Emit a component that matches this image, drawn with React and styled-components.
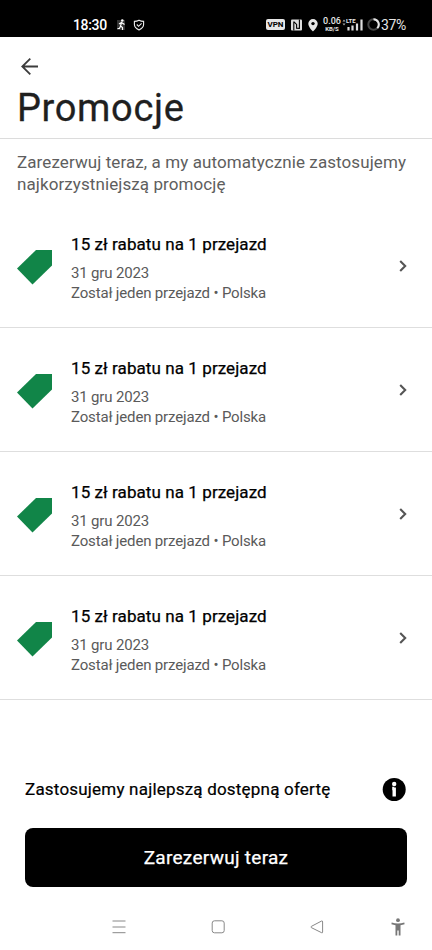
import styled, { createGlobalStyle } from "styled-components";

const GlobalStyle = createGlobalStyle`
    * {
        box-sizing: border-box;
    }
    body {
        margin: 0;
        background: #fff;
    }
`;
const Page = styled.div`
    display: flex;
    flex-direction: column;
    width: 100%;
    height: 950px;
    overflow: hidden;
    background: #fff;
    color: #000;
    font-family: Roboto, sans-serif;
`;
const StatusBar = styled.div`
    display: flex;
    align-items: center;
    height: 37px;
    flex-shrink: 0;
    padding: 12px 25px 0 73px;
    background: #000;
    color: #e6e6e6;
`;
const Clock = styled.span`
    width: 43px;
    color: #fff;
    font-size: 14px;
    font-weight: 500;
    line-height: 16px;
    letter-spacing: -0.35px;
    white-space: nowrap;
`;
const StatusIcons = styled.div`
    display: flex;
    align-items: center;
    margin-left: ${(props) => (props.$right ? "auto" : "0")};
`;
const Vpn = styled.span`
    width: 19px;
    height: 11px;
    margin-right: 6px;
    border-radius: 2px;
    background: #e6e6e6;
    color: #000;
    font-size: 8px;
    font-weight: 700;
    line-height: 11px;
    text-align: center;
`;
const Speed = styled.div`
    display: flex;
    flex-direction: column;
    align-items: center;
    width: 20px;
    font-size: 9px;
    font-weight: 500;
    line-height: 8px;
`;
const SpeedUnit = styled.span`
    font-size: 6px;
    font-weight: 700;
    line-height: 7px;
`;
const Signal = styled.div`
    display: flex;
    flex-direction: column;
    width: 21px;
    height: 13px;
    margin-right: 4px;
`;
const Lte = styled.span`
    height: 5px;
    padding-left: 4px;
    font-size: 6px;
    font-weight: 700;
    line-height: 5px;
`;
const SignalBars = styled.svg`
    margin-top: -5px;
`;
const Battery = styled.span`
    width: 26px;
    margin-left: 1px;
    font-size: 14px;
    line-height: 16px;
    letter-spacing: -0.4px;
    white-space: nowrap;
`;
const Header = styled.header`
    height: 102px;
    flex-shrink: 0;
    padding: 20px 17px 0;
    border-bottom: 1px solid #dcdcdc;
`;
const BackButton = styled.button`
    display: block;
    width: 24px;
    height: 20px;
    padding: 0;
    border: none;
    background: none;
`;
const Title = styled.h1`
    margin: 9px 0 0;
    color: #1f1f1f;
    font-size: 38px;
    font-weight: 400;
    line-height: 45px;
    letter-spacing: 0.65px;
    -webkit-text-stroke: 0.3px;
`;
const Intro = styled.p`
    height: 65px;
    flex-shrink: 0;
    margin: 0;
    padding: 12px 17px 0;
    color: #5e5e5e;
    font-size: 17px;
    line-height: 22px;
    letter-spacing: 0.09px;
    white-space: nowrap;
`;
const List = styled.ul`
    margin: 0;
    padding: 0;
    list-style: none;
`;
const Row = styled.li`
    display: flex;
    align-items: center;
    height: 124px;
    padding: 0 24px 0 17px;
    border-bottom: 1px solid #dedede;
`;
const Tag = styled.svg`
    margin-top: 4px;
`;
const RowText = styled.div`
    flex: 1;
    margin-left: 19px;
    padding-top: 5px;
`;
const RowTitle = styled.div`
    margin-bottom: 8px;
    font-size: 17px;
    font-weight: 400;
    line-height: 22px;
    letter-spacing: 0.08px;
    -webkit-text-stroke: 0.25px;
`;
const RowDetail = styled.div`
    color: #5a5a5a;
    font-size: 15px;
    line-height: 20px;
    letter-spacing: -0.16px;
`;
const Footer = styled.footer`
    margin-top: 75px;
    padding: 0 25px;
`;
const Offer = styled.div`
    display: flex;
    align-items: center;
    justify-content: space-between;
    height: 28px;
    font-size: 17px;
    letter-spacing: 0.2px;
    -webkit-text-stroke: 0.2px;
`;
const BookButton = styled.button`
    display: block;
    width: 100%;
    height: 59px;
    margin-top: 25px;
    padding: 0;
    border: none;
    border-radius: 8px;
    background: #000;
    color: #fff;
    font-family: inherit;
    font-size: 19px;
    letter-spacing: 0.28px;
    -webkit-text-stroke: 0.25px;
`;
const NavBar = styled.nav`
    display: flex;
    align-items: center;
    gap: 85px;
    height: 40px;
    margin-top: 20px;
    padding-left: 112px;

    svg:last-child {
        margin-left: -18px;
    }
`;

const promotions = [1, 2, 3, 4];

function StatusLeft() {
    return (
        <StatusIcons>
            <svg width="33" height="14" viewBox="0 0 33 14">
                <rect x="1" y="2" width="8" height="10" fill="#333" />
                <circle cx="6.3" cy="2.5" r="1.3" fill="#fff" />
                <path d="M5.7 4 4.5 8l2 1.5V12M4.6 8 3.4 10.5H1.5M3 6l2.5-1.6L8.5 6.5" fill="none" stroke="#fff" strokeWidth="1.2" />
                <path d="M23 2.2c1.7 1 3 1.2 4.6 1.2v3.2c0 2.5-2 4.2-4.6 5.4-2.6-1.2-4.6-2.9-4.6-5.4V3.4c1.6 0 2.9-.2 4.6-1.2Z" fill="none" stroke="#eee" strokeWidth="1.1" />
                <path d="m20.8 6.5 1.8 1.8 3-3" fill="none" stroke="#eee" strokeWidth="1.1" />
            </svg>
        </StatusIcons>
    );
}

function StatusRight() {
    return (
        <StatusIcons $right>
            <Vpn>VPN</Vpn>
            <svg width="31" height="14" viewBox="0 0 31 14">
                <rect x="0" y="1.5" width="11" height="11" rx="1" fill="#ddd" />
                <path d="M2.8 12.5V3.5M3 3.8l2.6 2.6v3.8l2.8.2V1.5" fill="none" stroke="#000" strokeWidth="1.1" />
                <path d="M22 1a4.7 4.7 0 0 0-4.7 4.7c0 3.3 4.7 7.8 4.7 7.8s4.7-4.5 4.7-7.8A4.7 4.7 0 0 0 22 1Z" fill="#e6e6e6" />
                <circle cx="22" cy="5.6" r="1.7" fill="#000" />
            </svg>
            <Speed>
                <span>0.06</span>
                <SpeedUnit>KB/S</SpeedUnit>
            </Speed>
            <Signal>
                <Lte>LTE</Lte>
                <SignalBars width="21" height="13" viewBox="0 0 21 13">
                    <path d="M.5 3.5 2 1.5l1.5 2M.5 5.5 2 7.5l1.5-2" fill="#aaa" />
                    <path d="M6.5 9v3.5M10.5 7.5v5M15 5.5v7M19.5 1.5v11" stroke="#ddd" strokeWidth="2.2" />
                </SignalBars>
            </Signal>
            <svg width="13" height="13" viewBox="0 0 13 13">
                <circle cx="6.5" cy="6.5" r="5.2" fill="none" stroke="#444" strokeWidth="2" />
                <path d="M6.5 1.3a5.2 5.2 0 0 1 3.8 8.8" fill="none" stroke="#e6e6e6" strokeWidth="2" />
            </svg>
            <Battery>37%</Battery>
        </StatusIcons>
    );
}

function PromotionRow() {
    return (
        <Row>
            <Tag width="35" height="35" viewBox="0 0 35 35">
                <path d="M19 0h16v15.5L15.5 34.5 0 18.5Z" fill="#118548" />
            </Tag>
            <RowText>
                <RowTitle>15 zł rabatu na 1 przejazd</RowTitle>
                <RowDetail>31 gru 2023</RowDetail>
                <RowDetail>Został jeden przejazd • Polska</RowDetail>
            </RowText>
            <svg width="9" height="12" viewBox="0 0 9 12">
                <path d="m1.2 1 5 5-5 5" fill="none" stroke="#555" strokeWidth="2.1" />
            </svg>
        </Row>
    );
}

export default function App() {
    return (
        <>
            <GlobalStyle />
            <Page>
                <StatusBar>
                    <Clock>18:30</Clock>
                    <StatusLeft />
                    <StatusRight />
                </StatusBar>
                <Header>
                    <BackButton aria-label="Wstecz">
                        <svg width="24" height="20" viewBox="0 0 24 20">
                            <path d="M21 9.5H5M13.3 1.7 5.3 9.5l8 7.8" fill="none" stroke="#3c3c3c" strokeWidth="1.8" />
                        </svg>
                    </BackButton>
                    <Title>Promocje</Title>
                </Header>
                <Intro>
                    Zarezerwuj teraz, a my automatycznie zastosujemy
                    <br />
                    najkorzystniejszą promocję
                </Intro>
                <List>
                    {promotions.map((id) => (
                        <PromotionRow key={id} />
                    ))}
                </List>
                <Footer>
                    <Offer>
                        Zastosujemy najlepszą dostępną ofertę
                        <svg width="25" height="24" viewBox="0 0 25 24">
                            <circle cx="12.2" cy="12.5" r="11.5" fill="#000" />
                            <circle cx="12.2" cy="7" r="2.2" fill="#fff" />
                            <path d="M12.2 10.5v9M10.2 11.5h2" stroke="#fff" strokeWidth="3.4" />
                        </svg>
                    </Offer>
                    <BookButton>Zarezerwuj teraz</BookButton>
                </Footer>
                <NavBar>
                    <svg width="14" height="14" viewBox="0 0 14 14">
                        <path d="M.5 1h13M.5 7h13M.5 12.7h13" stroke="#888" strokeWidth="1" />
                    </svg>
                    <svg width="14" height="14" viewBox="0 0 14 14">
                        <rect x="1.2" y=".8" width="12" height="12" rx="2.3" fill="none" stroke="#888" />
                    </svg>
                    <svg width="14" height="14" viewBox="0 0 14 14">
                        <path d="M12.6 2v10q0 1.2-1 .7L1.3 7.6q-.9-.6 0-1.2L11.6 1q1-.4 1 1Z" fill="none" stroke="#888" />
                    </svg>
                    <svg width="14" height="18" viewBox="0 0 14 18">
                        <circle cx="7" cy="2.2" r="1.9" fill="#777" />
                        <path d="M.7 4.6Q7 6.6 13.3 4.6l.3 1.6-4.1 1V17.5H7.7v-5H6.3v5H4.5V7.2L.4 6.2Z" fill="#777" />
                    </svg>
                </NavBar>
            </Page>
        </>
    );
}
